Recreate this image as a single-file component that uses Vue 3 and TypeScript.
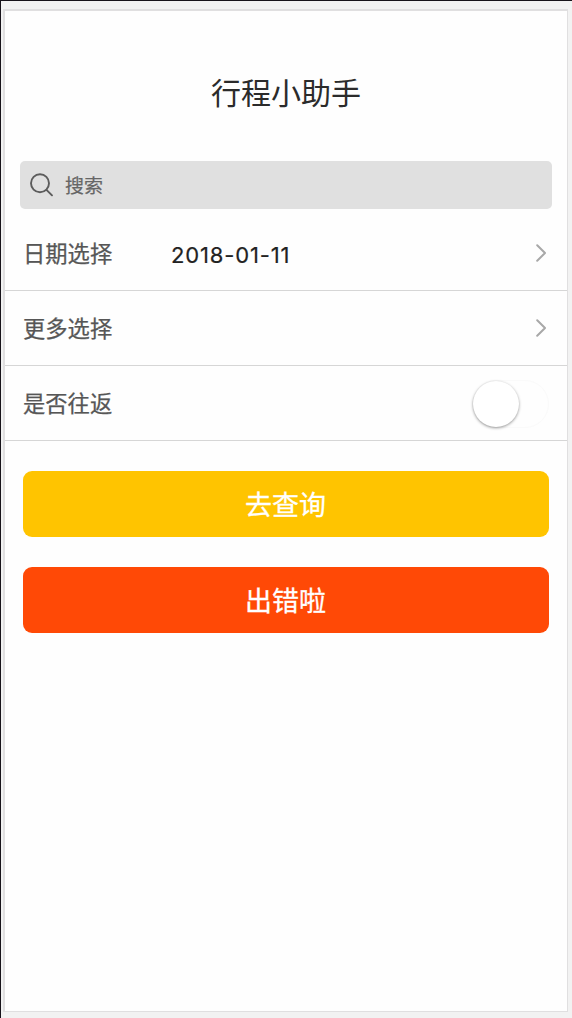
<script setup lang="ts">
import { ref } from 'vue'

const date = ref<string>('2018-01-11')
const roundTrip = ref<boolean>(false)
</script>

<template>
  <div class="frame">
    <main class="screen">
      <h1 class="title">行程小助手</h1>
      <div class="search">
        <svg class="search-icon" width="24" height="24" viewBox="0 0 24 24">
          <circle cx="10" cy="10.3" r="9" />
          <path d="M16.5 16.8L22 22.3" />
        </svg>
        <span>搜索</span>
      </div>
      <div class="row first">
        <span class="label">日期选择</span>
        <span class="value">{{ date }}</span>
        <svg class="arrow" width="10" height="18" viewBox="0 0 10 18"><path d="M1.2 1.2L9 9L1.2 16.8" /></svg>
      </div>
      <div class="row">
        <span class="label">更多选择</span>
        <svg class="arrow" width="10" height="18" viewBox="0 0 10 18"><path d="M1.2 1.2L9 9L1.2 16.8" /></svg>
      </div>
      <div class="row">
        <span class="label">是否往返</span>
        <button class="switch" :class="{ on: roundTrip }" @click="roundTrip = !roundTrip">
          <span class="knob"></span>
        </button>
      </div>
      <div class="actions">
        <button class="btn query">去查询</button>
        <button class="btn error">出错啦</button>
      </div>
    </main>
  </div>
</template>

<style>
body {
  margin: 0;
}
</style>

<style scoped>
.frame {
  box-sizing: border-box;
  width: 572px;
  height: 1018px;
  padding: 8px 4px 6px 2px;
  border-top: 1px solid #17131a;
  border-left: 1px solid #17131a;
  background: #f2f2f2;
  font-family: "Liberation Sans", "Noto Sans CJK SC", sans-serif;
}
.screen {
  box-sizing: border-box;
  height: 1003px;
  border: 2px solid #e0dfe0;
  border-bottom-width: 1px;
  border-right-width: 1px;
  background: #fefefe;
  overflow: hidden;
}
.title {
  margin: 63px 0 0;
  height: 40px;
  line-height: 40px;
  font-size: 30px;
  font-weight: 400;
  text-align: center;
  color: #2b2b2b;
}
.search {
  box-sizing: border-box;
  display: flex;
  align-items: center;
  height: 48px;
  margin: 46.5px 15px 0 14.5px;
  padding-left: 10px;
  border-radius: 5px;
  background: #e0e0e0;
  color: #666;
  font-size: 19px;
}
.search span {
  margin: 0 0 1px 11.5px;
  -webkit-text-stroke: 0.2px;
}
.search-icon {
  fill: none;
  stroke: #5c5c5c;
  stroke-width: 1.9;
  stroke-linecap: round;
}
.row {
  box-sizing: border-box;
  display: flex;
  align-items: center;
  height: 75px;
  padding: 0 21px 0 18px;
  border-bottom: 1px solid #d6d6d6;
  color: #565656;
  font-size: 22.3px;
}
.row.first {
  height: 82.5px;
  padding-top: 7.5px;
}
.label {
  width: 148px;
  padding-bottom: 2px;
  -webkit-text-stroke: 0.25px;
}
.value {
  padding-top: 3px;
  font-family: Inter, sans-serif;
  font-size: 22px;
  letter-spacing: 0.86px;
  color: #222;
  -webkit-text-stroke: 0.2px;
}
.arrow {
  margin-left: auto;
  fill: none;
  stroke: #a8a8a8;
  stroke-width: 2;
  stroke-linecap: round;
  stroke-linejoin: round;
}
.switch {
  display: flex;
  box-sizing: border-box;
  width: 77px;
  height: 48px;
  margin: 1px -3px 0 auto;
  padding: 0;
  border: 1px solid #fafafa;
  border-radius: 24px;
  background: #fefefe;
}
.knob {
  width: 46px;
  height: 46px;
  border-radius: 50%;
  background: #fff;
  box-shadow: 0 1px 3px rgba(0, 0, 0, 0.42);
}
.switch.on {
  justify-content: flex-end;
}
.actions {
  display: flex;
  flex-direction: column;
  gap: 30px;
  padding: 30px 18.5px 0 17.5px;
}
.btn {
  height: 66px;
  padding: 0 0 2px;
  border: 0;
  border-radius: 9px;
  color: #fff;
  font-family: inherit;
  font-size: 27px;
  -webkit-text-stroke: 0.3px;
}
.query {
  background: #ffc400;
}
.error {
  background: #ff4906;
}
</style>
